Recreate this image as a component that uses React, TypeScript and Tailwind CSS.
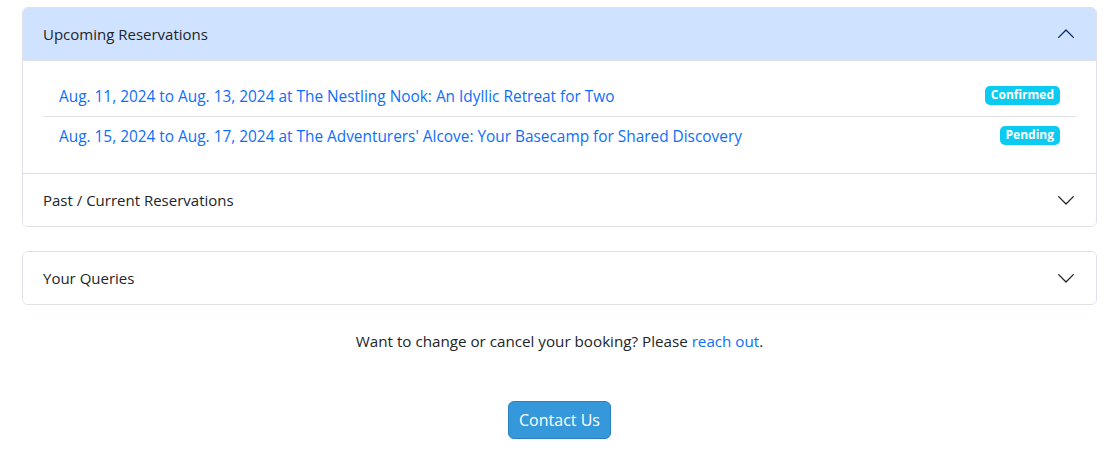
import { useState } from 'react'

const font = { fontFamily: '"Open Sans", "Noto Sans", sans-serif' }

function Chevron({ up, className }: { up?: boolean; className?: string }) {
  return (
    <svg className={className} width="18" height="18" viewBox="0 0 16 16" fill="none" stroke="currentColor" strokeWidth="1.2" strokeLinecap="round" strokeLinejoin="round">
      {up ? <path d="M1.5 11 8 4.5 14.5 11" /> : <path d="M1.5 5 8 11.5 14.5 5" />}
    </svg>
  )
}

const reservations = [
  { text: 'Aug. 11, 2024 to Aug. 13, 2024 at The Nestling Nook: An Idyllic Retreat for Two', status: 'Confirmed' },
  { text: "Aug. 15, 2024 to Aug. 17, 2024 at The Adventurers' Alcove: Your Basecamp for Shared Discovery", status: 'Pending' },
]

export default function App() {
  const [open, setOpen] = useState<string | null>('upcoming')
  const toggle = (k: string) => setOpen(open === k ? null : k)

  return (
    <div className="min-h-screen bg-white px-[22px] pt-[7px] text-[#212529] text-[15px]" style={font}>
      {/* Reservations accordion */}
      <div className="border border-[#dee2e6] rounded-md overflow-hidden">
        <button
          onClick={() => toggle('upcoming')}
          className={`w-full h-[52px] flex items-center justify-between pl-5 pr-[21px] text-left ${open === 'upcoming' ? 'bg-[#cfe2ff] text-[#052c65]' : 'bg-white'}`}
        >
          <span className={open === 'upcoming' ? 'text-[#212529]' : ''}>Upcoming Reservations</span>
          <Chevron up={open === 'upcoming'} />
        </button>
        {open === 'upcoming' && (
          <div className="px-5 py-4 border-t border-[#dee2e6]">
            {reservations.map((r, i) => (
              <div key={i} className={`h-10 flex items-center justify-between pl-4 pr-4 ${i < reservations.length - 1 ? 'border-b border-[#dee2e6]' : ''}`}>
                <a href="#" className="text-[#0d6efd] text-[15.4px] leading-none">{r.text}</a>
                <span className="-mt-[3px] bg-[#0dcaf0] text-white text-[12px] font-bold leading-none rounded-[5px] px-[6px] pt-[3px] pb-[4px]">{r.status}</span>
              </div>
            ))}
          </div>
        )}
        <button
          onClick={() => toggle('past')}
          className="w-full h-[53px] flex items-center justify-between pl-5 pr-[21px] text-left bg-white border-t border-[#dee2e6]"
        >
          <span>Past / Current Reservations</span>
          <Chevron up={open === 'past'} />
        </button>
      </div>

      {/* Queries accordion */}
      <div className="mt-6 border border-[#dee2e6] rounded-md overflow-hidden">
        <button
          onClick={() => toggle('queries')}
          className="w-full h-[52px] flex items-center justify-between pl-5 pr-[21px] text-left bg-white"
        >
          <span>Your Queries</span>
          <Chevron up={open === 'queries'} />
        </button>
      </div>

      <p className="mt-6 text-center text-[15.2px] leading-6">
        Want to change or cancel your booking? Please <a href="#" className="text-[#0d6efd]">reach out</a>.
      </p>

      <div className="mt-[48px] flex justify-center">
        <button className="h-[38px] px-[10px] rounded-md bg-[#3498db] border border-[#2a7fc0] text-white text-base">
          Contact Us
        </button>
      </div>
    </div>
  )
}
